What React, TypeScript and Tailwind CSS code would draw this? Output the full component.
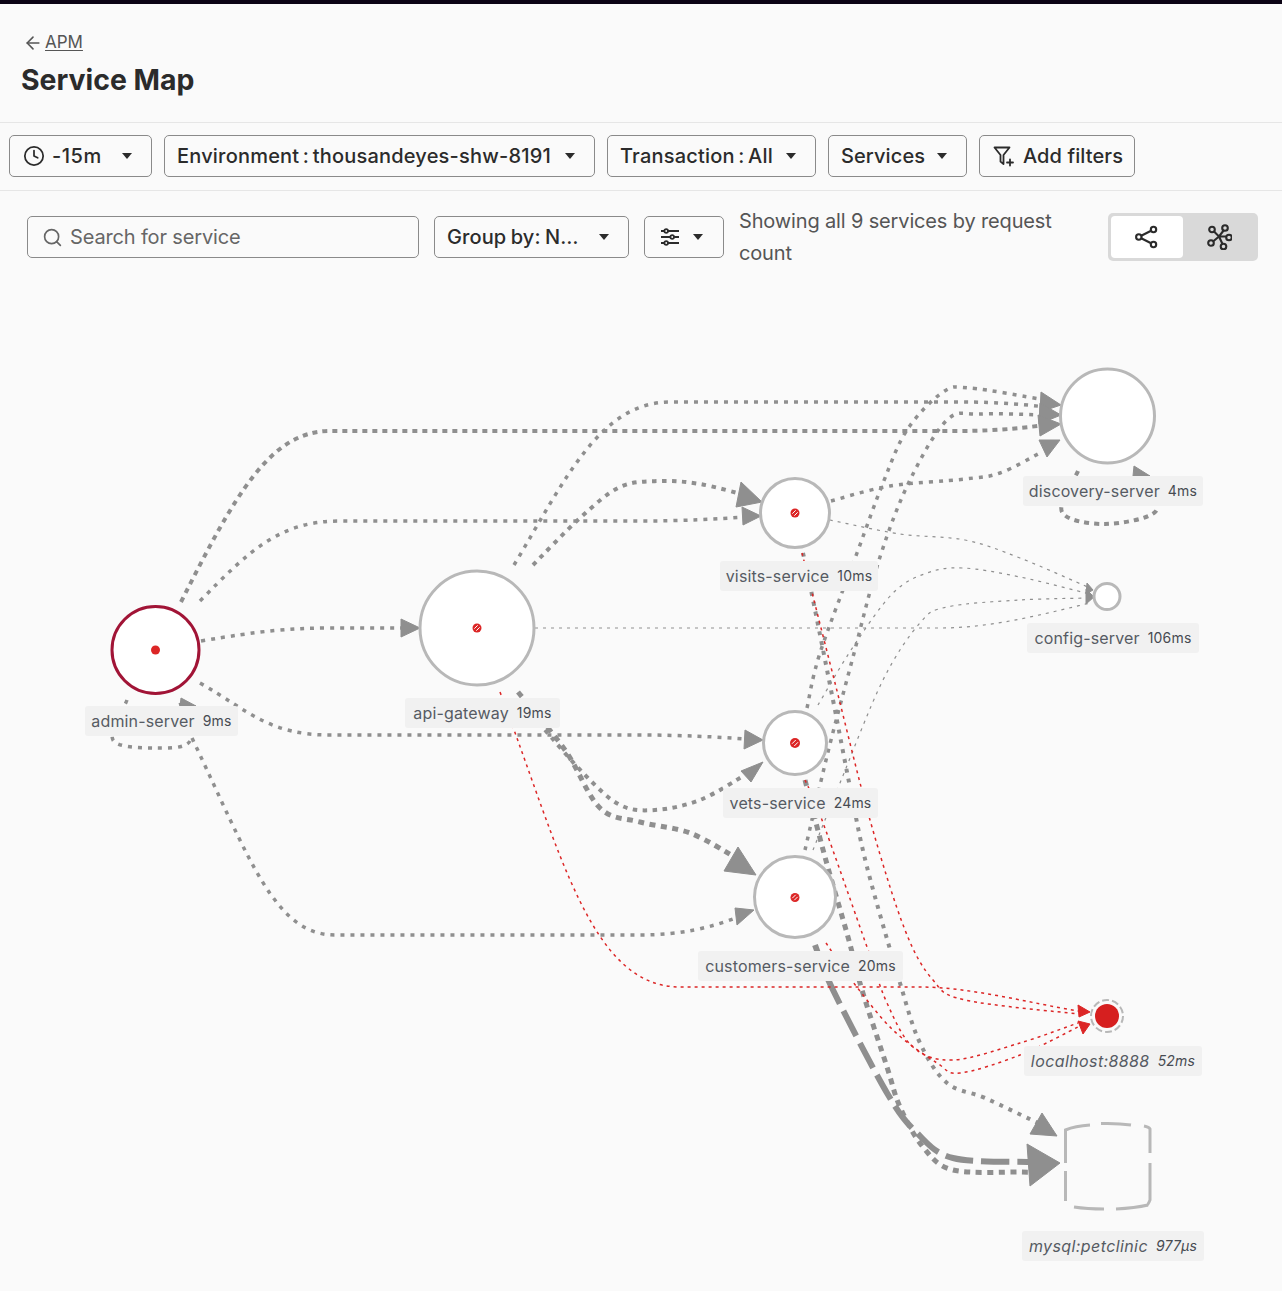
import { ArrowLeft, Clock, Search } from "lucide-react";

type P = [number, number];

function spline(pts: P[]): string {
  let d = `M${pts[0][0]},${pts[0][1]}`;
  for (let i = 0; i < pts.length - 1; i++) {
    const p0 = pts[i - 1] || pts[i];
    const p1 = pts[i];
    const p2 = pts[i + 1];
    const p3 = pts[i + 2] || p2;
    const c1 = [p1[0] + (p2[0] - p0[0]) / 6, p1[1] + (p2[1] - p0[1]) / 6];
    const c2 = [p2[0] - (p3[0] - p1[0]) / 6, p2[1] - (p3[1] - p1[1]) / 6];
    d += ` C${c1[0]},${c1[1]} ${c2[0]},${c2[1]} ${p2[0]},${p2[1]}`;
  }
  return d;
}

const GRAY = "#8f8f8f";
const RED = "#dc2626";

type Edge = { pts?: P[]; d?: string; w: number; dash: string; color?: string };

const M = { w: 3.5, dash: "4 6" };
const T = { w: 1.2, dash: "3 5" };
const R = { w: 1.5, dash: "3 4", color: RED };

const edges: Edge[] = [
  // admin-server
  { d: "M181,602 C235,495 270,431 330,431 L960,431 C1000,431 1030,427 1045,425", w: 4, dash: "5 5" },
  { d: "M200,601 C250,550 280,521 340,521 L640,521 C680,521 720,519 745,517", ...M },
  { d: "M201,641 C260,631 290,628 330,628 L402,628", ...M },
  { d: "M200,683 C250,712 270,735 330,735 L640,735 C680,735 720,737 745,739", ...M },
  { d: "M192,738 C250,860 275,935 335,935 L640,935 C680,935 710,928 738,917", ...M },
  { pts: [[127, 700], [113, 740], [155, 748], [190, 741], [180, 702]], ...M },
  // api-gateway
  { d: "M514,565 C565,480 600,402 670,402 L960,402 C1000,402 1030,405 1045,407", ...M },
  { pts: [[533, 565], [580, 518], [620, 487], [660, 481], [700, 484], [745, 495]], w: 4, dash: "4.5 5.5" },
  { d: "M535,628 L940,628 C990,628 1040,615 1090,603", ...T },
  { pts: [[545, 730], [585, 775], [620, 805], [655, 810], [700, 800], [745, 775]], w: 4, dash: "4.5 5.5" },
  { pts: [[518, 692], [565, 750], [600, 808], [640, 822], [690, 833], [733, 856]], w: 5, dash: "6 5.5" },
  // discovery inbound
  { pts: [[831, 501], [890, 486], [965, 479], [1000, 473], [1040, 453]], ...M },
  { pts: [[807, 708], [820, 653], [857, 553], [883, 483], [907, 430], [943, 392], [970, 388], [1040, 399]], ...M },
  { pts: [[805, 850], [828, 752], [853, 657], [880, 557], [910, 480], [947, 420], [980, 414], [1045, 415]], ...M },
  // config thin
  { pts: [[830, 520], [900, 534], [965, 540], [1020, 558], [1090, 588]], ...T },
  { pts: [[818, 705], [853, 647], [893, 593], [927, 573], [963, 568], [1020, 577], [1090, 594]], ...T },
  { pts: [[813, 850], [840, 783], [883, 680], [920, 623], [947, 607], [1020, 600], [1090, 598]], ...T },
  // discovery loop
  { pts: [[1078, 471], [1062, 512], [1105, 524], [1156, 511], [1140, 478]], w: 4, dash: "5 5" },
  // to mysql
  { pts: [[803, 553], [812, 595], [833, 700], [850, 787], [867, 867], [900, 983], [920, 1043], [947, 1083], [985, 1098], [1040, 1124]], w: 4, dash: "4 6" },
  { pts: [[805, 780], [825, 857], [848, 937], [862, 990], [887, 1067], [900, 1107], [923, 1147], [953, 1170], [1020, 1172], [1030, 1172]], w: 5, dash: "6 5.5" },
  { pts: [[815, 945], [833, 990], [887, 1093], [917, 1133], [953, 1158], [1030, 1162]], w: 6, dash: "28 8" },
  // red
  { d: "M500,692 C560,850 590,987 680,987 L920,987 C970,987 1030,1003 1078,1011", ...R },
  { pts: [[802, 553], [835, 683], [870, 820], [905, 930], [933, 980], [965, 1000], [1078, 1014]], ...R },
  { pts: [[805, 780], [822, 820], [867, 947], [887, 1003], [913, 1047], [953, 1060], [1020, 1043], [1078, 1023]], ...R },
  { pts: [[826, 943], [853, 982], [893, 1030], [937, 1063], [960, 1073], [1020, 1055], [1078, 1027]], ...R },
];

const arrows: { a: P; b: P; c: P; color?: string }[] = [
  { a: [401, 619], b: [420, 628], c: [401, 637] },
  { a: [741, 482], b: [762, 502], c: [736, 507] },
  { a: [742, 507], b: [761, 516], c: [743, 525] },
  { a: [745, 730], b: [763, 740], c: [744, 749] },
  { a: [741, 771], b: [763, 762], c: [751, 782] },
  { a: [738, 847], b: [756, 875], c: [724, 871] },
  { a: [735, 908], b: [754, 910], c: [737, 925] },
  { a: [1041, 392], b: [1061, 405], c: [1040, 412] },
  { a: [1040, 403], b: [1061, 415], c: [1039, 424] },
  { a: [1038, 415], b: [1061, 424], c: [1040, 436] },
  { a: [1039, 440], b: [1060, 440], c: [1047, 457] },
  { a: [181, 698], b: [196, 706], c: [180, 706] },
  { a: [1134, 466], b: [1150, 476], c: [1133, 476] },
  { a: [1087, 583], b: [1093, 590], c: [1086, 594] },
  { a: [1086, 589], b: [1094, 597], c: [1086, 604] },
  { a: [1042, 1113], b: [1057, 1136], c: [1030, 1134] },
  { a: [1027, 1144], b: [1060, 1163], c: [1030, 1186] },
  { a: [1078, 1005], b: [1090, 1012], c: [1079, 1017], color: RED },
  { a: [1078, 1021], b: [1090, 1024], c: [1083, 1034], color: RED },
];

const rings: { x: number; y: number; r: number; stroke?: string }[] = [
  { x: 155.5, y: 650, r: 43.5, stroke: "#a11436" },
  { x: 477, y: 628, r: 57 },
  { x: 795, y: 513, r: 34.5 },
  { x: 795, y: 743, r: 31.5 },
  { x: 795, y: 897, r: 40.5 },
  { x: 1107.5, y: 416, r: 47 },
  { x: 1107, y: 596.5, r: 13 },
];

function Blocked({ x, y, r }: { x: number; y: number; r: number }) {
  return (
    <g>
      <circle cx={x} cy={y} r={r} fill={RED} />
      <line x1={x - r * 0.6} y1={y + r * 0.15} x2={x + r * 0.15} y2={y - r * 0.6} stroke="#fff" strokeWidth={1} />
      <line x1={x - r * 0.15} y1={y + r * 0.6} x2={x + r * 0.6} y2={y - r * 0.15} stroke="#fff" strokeWidth={1} />
    </g>
  );
}

function Caret() {
  return (
    <svg width="12" height="8" viewBox="0 0 12 8" className="shrink-0">
      <path d="M1 1h10L6 7z" fill="#2b2b2b" />
    </svg>
  );
}

function Btn({ children, className }: { children: React.ReactNode; className: string }) {
  return (
    <div className={`flex h-[42px] items-center rounded-[5px] border border-[#8a8a8a] bg-[#fafafa] text-[20px] font-medium tracking-[0.1px] text-[#2b2b2b] ${className}`}>
      {children}
    </div>
  );
}

function Label({ name, time, cls, italic }: { name: string; time: string; cls: string; italic?: boolean }) {
  return (
    <div className={`absolute flex h-[30px] items-center justify-center gap-2 rounded-[3px] bg-[#f1f1f1] text-[#565b63] ${italic ? "italic" : ""} ${cls}`}>
      <span className={`text-[16px] leading-none ${italic ? "tracking-[0.4px]" : "tracking-[0.15px]"}`}>{name}</span>
      <span className="text-[14px] leading-none tracking-[0.2px] text-[#474b52]">{time}</span>
    </div>
  );
}

export default function App() {
  return (
    <div className="min-h-[1291px] w-[1282px] overflow-hidden bg-[#fafafa] font-['Inter',sans-serif] text-[#2b2b2b]">
      <div className="h-1 bg-[#0b0314]" />
      <div className="h-[119px] border-b border-[#e6e6e6] pl-[21px] pt-[29px]">
        <div className="flex h-5 items-center text-[17px] text-[#555]">
          <ArrowLeft size={20} strokeWidth={1.9} className="ml-[2px] mr-[2px]" />
          <span className="underline underline-offset-2">APM</span>
        </div>
        <div className="mt-[9px] text-[28.4px] font-bold leading-[36px] text-[#2b2b2b]">Service Map</div>
      </div>

      <div className="flex h-[68px] items-start gap-3 border-b border-[#e6e6e6] pl-[9px] pt-[12px]">
        <Btn className="w-[143px] pl-[13px] pr-[18px]">
          <Clock size={22} strokeWidth={1.9} className="mr-[7px]" />
          <span className="tracking-[0.5px]">-15m</span>
          <span className="ml-auto"><Caret /></span>
        </Btn>
        <Btn className="w-[431px] pl-3 pr-[18px]">
          <span className="whitespace-nowrap [word-spacing:-2px] tracking-[0.2px]">Environment : thousandeyes-shw-8191</span>
          <span className="ml-auto"><Caret /></span>
        </Btn>
        <Btn className="w-[209px] pl-3 pr-[18px]">
          <span className="whitespace-nowrap [word-spacing:-2px] tracking-[0.2px]">Transaction : All</span>
          <span className="ml-auto"><Caret /></span>
        </Btn>
        <Btn className="w-[139px] pl-3 pr-[18px]">
          <span>Services</span>
          <span className="ml-auto"><Caret /></span>
        </Btn>
        <Btn className="w-[156px] pl-[12px]">
          <svg width="24" height="24" viewBox="0 0 24 24" fill="none" stroke="#2b2b2b" strokeWidth="1.8" strokeLinejoin="round" strokeLinecap="round" className="mr-[7px] shrink-0">
            <path d="M2.5 3.5h15L11.5 11v9l-3-2.5V11z" />
            <path d="M18 15.5v6M15 18.5h6" />
          </svg>
          <span className="whitespace-nowrap">Add filters</span>
        </Btn>
      </div>

      <div className="flex h-[92px] items-center pl-[27px]">
        <div className="flex h-[42px] w-[392px] items-center rounded-[5px] border border-[#8a8a8a] pl-[14px] text-[20px] tracking-[-0.15px] text-[#666]">
          <Search size={21} strokeWidth={1.9} className="mr-[7px]" />
          <span>Search for service</span>
        </div>
        <Btn className="ml-[15px] w-[195px] pl-3 pr-[18px]">
          <span className="whitespace-nowrap [word-spacing:-1px]">Group by: N…</span>
          <span className="ml-auto"><Caret /></span>
        </Btn>
        <Btn className="ml-[15px] w-[80px] pl-[14px] pr-[19px]">
          <svg width="22" height="22" viewBox="0 0 22 22" fill="none" stroke="#2b2b2b" strokeWidth="1.8" className="shrink-0">
            <path d="M2 5h3.5M9 5h11M2 11h9.5M15 11h5M2 17h3.5M9 17h11" />
            <circle cx="7.2" cy="5" r="1.8" />
            <circle cx="13.2" cy="11" r="1.8" />
            <circle cx="7.2" cy="17" r="1.8" />
          </svg>
          <span className="ml-auto"><Caret /></span>
        </Btn>
        <div className="ml-[15px] w-[340px] text-[20px] leading-[32px] tracking-[-0.15px] text-[#555]">
          Showing all 9 services by request count
        </div>
        <div className="ml-[29px] flex h-[48px] w-[150px] rounded-[5px] bg-[#d9d9d9] p-[3px]">
          <div className="flex w-[72px] items-center justify-center rounded-[4px] bg-white">
            <svg width="24" height="24" viewBox="0 0 24 24" fill="none" stroke="#2b2b2b" strokeWidth="2.1">
              <circle cx="18.5" cy="4.5" r="2.7" />
              <circle cx="3.8" cy="12" r="2.7" />
              <circle cx="18.5" cy="19.5" r="2.7" />
              <path d="M6.2 10.8L16.1 5.7M6.2 13.2L16.1 18.3" />
            </svg>
          </div>
          <div className="flex flex-1 items-center justify-center">
            <svg width="26" height="26" viewBox="0 0 26 26" fill="none" stroke="#2b2b2b" strokeWidth="2.1">
              <circle cx="6" cy="5.5" r="2.8" />
              <circle cx="19" cy="4" r="2.8" />
              <circle cx="23" cy="13.5" r="2.8" />
              <circle cx="17.5" cy="22.5" r="2.8" />
              <circle cx="5" cy="19" r="2.8" />
              <path d="M8 7.5l5 5 5-6.5M13 12.5h7.5M13 12.5l3.5 7.5M13 12.5l-6 5" />
            </svg>
          </div>
        </div>
      </div>

      <div className="relative h-[1008px] w-full">
        <svg width="1282" height="1008" viewBox="0 283 1282 1008" className="absolute left-0 top-0">
          {edges.map((e, i) => (
            <path key={i} d={e.d || spline(e.pts as P[])} fill="none" stroke={e.color || GRAY} strokeWidth={e.w} strokeDasharray={e.dash} />
          ))}
          {arrows.map((a, i) => (
            <polygon
              key={i}
              points={`${a.a[0]},${a.a[1]} ${a.b[0]},${a.b[1]} ${a.c[0]},${a.c[1]}`}
              fill={a.color || GRAY}
              stroke={a.color || GRAY}
              strokeWidth={1}
              strokeLinejoin="round"
            />
          ))}
          {rings.map((n, i) => (
            <circle key={i} cx={n.x} cy={n.y} r={n.r} fill="#fff" stroke={n.stroke || "#b8b8b8"} strokeWidth={3} />
          ))}
          <circle cx={155.5} cy={650} r={4.5} fill={RED} />
          <Blocked x={477} y={628} r={4.5} />
          <Blocked x={795} y={513} r={4.5} />
          <Blocked x={795} y={743} r={5} />
          <Blocked x={795} y={897.5} r={4.5} />
          <circle cx={1107} cy={1016} r={12} fill="#d61f1f" />
          <circle cx={1107} cy={1016} r={16} fill="none" stroke="#b8b8b8" strokeWidth={2} strokeDasharray="7 3" />
          {/* database outline */}
          <g fill="none" stroke="#b8b8b8" strokeWidth={3}>
            <path d="M1065.5 1163V1130Q1075 1126 1090 1125" />
            <path d="M1101 1123.5Q1118 1123 1131 1125" />
            <path d="M1144 1126Q1149 1127 1150 1129V1153" />
            <path d="M1150 1163V1200Q1148 1205 1147 1205" />
            <path d="M1065.5 1171V1201" />
            <path d="M1074 1207Q1087 1209 1104 1209" />
            <path d="M1116 1209Q1135 1208 1148 1205" />
          </g>
        </svg>

        <Label name="admin-server" time="9ms" cls="left-[85px] top-[423px] w-[153px]" />
        <Label name="api-gateway" time="19ms" cls="left-[405px] top-[415px] w-[155px]" />
        <Label name="visits-service" time="10ms" cls="left-[720px] top-[278px] w-[158px]" />
        <Label name="vets-service" time="24ms" cls="left-[723px] top-[505px] w-[155px]" />
        <Label name="customers-service" time="20ms" cls="left-[698px] top-[668px] w-[205px]" />
        <Label name="discovery-server" time="4ms" cls="left-[1023px] top-[193px] w-[180px]" />
        <Label name="config-server" time="106ms" cls="left-[1027px] top-[340px] w-[172px]" />
        <Label name="localhost:8888" time="52ms" cls="left-[1024px] top-[763px] w-[178px]" italic />
        <Label name="mysql:petclinic" time="977µs" cls="left-[1022px] top-[948px] w-[182px]" italic />
      </div>
    </div>
  );
}
